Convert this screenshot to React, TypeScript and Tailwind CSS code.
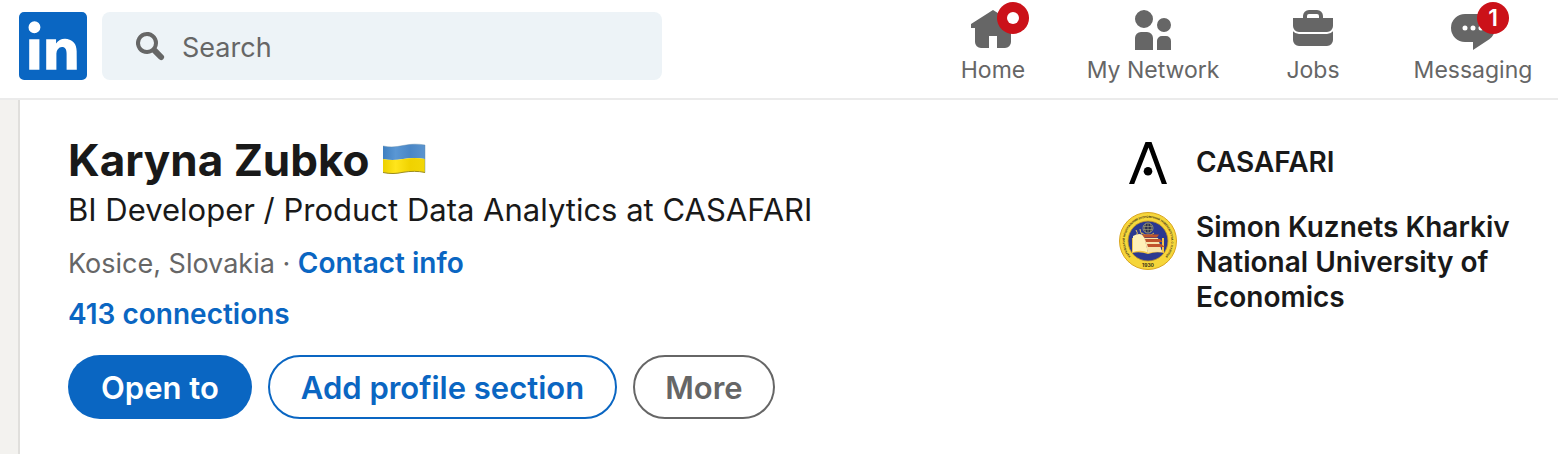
import React from 'react';

const HOME =
  'M23 9v2h-2v7a3 3 0 01-3 3h-4v-6h-4v6H6a3 3 0 01-3-3v-7H1V9l11-7 5 3.18V2h3v5.09z';
const NETWORK =
  'M12 16v6H3v-6a3 3 0 013-3h3a3 3 0 013 3zm5.5-3A3.5 3.5 0 1014 9.5a3.5 3.5 0 003.5 3.5zm1 2h-2a2.5 2.5 0 00-2.5 2.5V22h7v-4.5a2.5 2.5 0 00-2.5-2.5zM7.5 2A4.5 4.5 0 1012 6.5 4.49 4.49 0 007.5 2z';
const JOBS =
  'M17 6V5a3 3 0 00-3-3h-4a3 3 0 00-3 3v1H2v4a3 3 0 003 3h14a3 3 0 003-3V6zM9 5a1 1 0 011-1h4a1 1 0 011 1v1H9zm10 9a4 4 0 003-1.38V17a3 3 0 01-3 3H5a3 3 0 01-3-3v-4.38A4 4 0 005 14z';
const MESSAGING =
  'M16 4H8a7 7 0 000 14h4v4l8.16-5.39A6.78 6.78 0 0023 11a7 7 0 00-7-7zm-8 8.25A1.25 1.25 0 119.25 11 1.25 1.25 0 018 12.25zm4 0A1.25 1.25 0 1113.25 11 1.25 1.25 0 0112 12.25zm4 0A1.25 1.25 0 1117.25 11 1.25 1.25 0 0116 12.25z';

type NavItem = { label: string; icon: string; badge?: React.ReactNode };

const navItems: NavItem[] = [
  { label: 'Home', icon: HOME, badge: <span className="size-3 rounded-full bg-white" /> },
  { label: 'My Network', icon: NETWORK },
  { label: 'Jobs', icon: JOBS },
  { label: 'Messaging', icon: MESSAGING, badge: '1' },
];

function Logo() {
  return (
    <svg viewBox="2 2 20 20" className="size-[68px]" aria-hidden="true">
      <rect x="3" y="3" width="18" height="18" fill="#fff" />
      <path
        fill="#0a66c2"
        d="M20.5 2h-17A1.5 1.5 0 002 3.5v17A1.5 1.5 0 003.5 22h17a1.5 1.5 0 001.5-1.5v-17A1.5 1.5 0 0020.5 2zM8 19H5v-9h3zM6.5 8.25A1.75 1.75 0 118.3 6.5a1.78 1.78 0 01-1.8 1.75zM19 19h-3v-4.74c0-1.42-.6-1.93-1.38-1.93A1.74 1.74 0 0013 14.19a.66.66 0 000 .14V19h-3v-9h2.9v1.3a3.11 3.11 0 012.7-1.4c1.55 0 3.36.86 3.36 3.66z"
      />
    </svg>
  );
}

function Flag() {
  return (
    <svg viewBox="0 1 44 32" className="h-8 w-11 overflow-visible" role="img" aria-label="Ukraine">
      <defs>
        <linearGradient id="flag-blue" x1="0" x2="1" y1="0" y2="0">
          <stop offset="0" stopColor="#3f7fc0" />
          <stop offset="0.3" stopColor="#5a97d4" />
          <stop offset="0.65" stopColor="#4a86c6" />
          <stop offset="1" stopColor="#5b94cf" />
        </linearGradient>
        <linearGradient id="flag-yellow" x1="0" x2="1" y1="0" y2="0">
          <stop offset="0" stopColor="#ecd000" />
          <stop offset="0.3" stopColor="#ffe51c" />
          <stop offset="0.65" stopColor="#f0d200" />
          <stop offset="1" stopColor="#f2d708" />
        </linearGradient>
      </defs>
      <path d="M1 3C8 4.500 14 4 21 2.500C29 .8 36 .8 43 2V16C36 14.500 29 14.500 21 16C14 17.200 8 17.500 1 16z" fill="url(#flag-blue)" />
      <path d="M1 16C8 17.500 14 17.200 21 16C29 14.500 36 14.500 43 16V29.500C36 28 29 28 21 29.300C14 30.800 8 31 1 29.500z" fill="url(#flag-yellow)" />
      <path d="M1 29.500C8 31 14 30.800 21 29.300C29 28 36 28 43 29.500" fill="none" stroke="#9c8c1c" strokeWidth="1" />
      <path d="M1 3C8 4.500 14 4 21 2.500C29 .8 36 .8 43 2V29.500" fill="none" stroke="#5b86a8" strokeOpacity="0.6" strokeWidth="0.7" />
    </svg>
  );
}

function CasafariMark() {
  return (
    <svg viewBox="0 0 64 64" className="size-16 shrink-0" aria-hidden="true">
      <path d="M29.500 12h6L51 54h-5.200L32.500 17.500 18.200 54H13z" fill="#000" />
      <circle cx="32" cy="41.300" r="4.300" fill="#000" />
    </svg>
  );
}

function UniversitySeal() {
  return (
    <svg viewBox="0 1 64 64" className="size-16 shrink-0" aria-hidden="true">
      <defs>
        <path id="seal-ring" d="M19.200 51.500A23.300 23.300 0 1 1 44.800 51.500" />
      </defs>
      <circle cx="32" cy="32" r="28.500" fill="#f6d63a" stroke="#d9a520" strokeWidth="1" />
      <circle cx="32" cy="32" r="20" fill="#2b3990" stroke="#c79a24" strokeWidth="0.8" />
      <text fontSize="2.700" fontWeight="700" fill="#3a3218" fontFamily="Inter, sans-serif">
        <textPath href="#seal-ring" startOffset="50%" textAnchor="middle">
          ХАРКІВСЬКИЙ НАЦІОНАЛЬНИЙ ЕКОНОМІЧНИЙ УНІВЕРСИТЕТ ІМ. С. КУЗНЕЦЯ
        </textPath>
      </text>
      <text x="32" y="58" fontSize="5" fontWeight="700" fill="#3a3218" textAnchor="middle" fontFamily="Inter, sans-serif">
        1930
      </text>
      <circle cx="32" cy="19" r="5" fill="#2a2d4a" stroke="#9a9a78" strokeWidth="0.9" />
      <path d="M27.500 17.500h9M27.500 20.500h9M32 14.500v9M29.500 15q-2 4 0 8M34.500 15q2 4 0 8" fill="none" stroke="#a9a77c" strokeWidth="0.6" />
      <path d="M26 24l3 2h6l3-2" fill="none" stroke="#d9b54a" strokeWidth="1" />
      <path d="M16 29v15q8-2 16 1 8-3 16-1V29h-2v12q-7-1-14 2-7-4-14-1V29z" fill="#f3c646" />
      <path d="M17 27q7-4 11 0l4 16.500q-7-3-15-.5z" fill="#fff1b8" />
      <path d="M20 21q2 3 1 5M24 20q0 3 2 5" stroke="#e8c860" strokeWidth="1" fill="none" />
      <path d="M28 29h14l4 14q-8-1-14 1z" fill="#f7e3a8" />
      <path d="M26 25.500h17l-2 3H28zM29 30h15l2.500 3H30zM31 35h14l4 3H32z" fill="#c0532a" />
    </svg>
  );
}

export default function App() {
  return (
    <div className="flex min-h-screen flex-col bg-white font-['Inter','Liberation_Sans',sans-serif] text-[#191919]">
      <header className="flex h-[100px] items-start border-b-2 border-[#ebebeb] pr-[5px] pl-[19px]">
        <a href="#feed" aria-label="LinkedIn" className="mt-3 shrink-0">
          <Logo />
        </a>
        <label className="mt-3 ml-[15px] flex h-[68px] w-[560px] items-center gap-4 rounded-lg bg-[#edf3f7] pl-8">
          <svg viewBox="0 0 16 16" className="size-8 shrink-0" fill="#666" aria-hidden="true">
            <path d="M14.560 12.440L11.300 9.180a5.510 5.510 0 10-2.120 2.120l3.260 3.260a1.500 1.500 0 102.120-2.120zM3 6.500A3.500 3.500 0 116.500 10 3.500 3.500 0 013 6.500z" />
          </svg>
          <input
            type="text"
            aria-label="Search"
            placeholder="Search"
            className="min-w-0 flex-1 bg-transparent pt-1 text-[27px] outline-none placeholder:text-[#666]"
          />
        </label>
        <nav className="ml-auto flex pt-1.5">
          {navItems.map((item) => (
            <a key={item.label} href="#nav" className="flex w-40 flex-col items-center text-[#666]">
              <span className="relative">
                <svg viewBox="0 0 24 24" className="size-12" fill="currentColor" aria-hidden="true">
                  <path d={item.icon} />
                </svg>
                {item.badge && (
                  <span className="absolute -top-1 left-7 flex size-8 items-center justify-center rounded-full bg-[#cb1119] text-[23px] font-semibold text-white">
                    {item.badge}
                  </span>
                )}
              </span>
              <span className="text-[23px] leading-8 whitespace-nowrap">{item.label}</span>
            </a>
          ))}
        </nav>
      </header>

      <main className="flex flex-1 bg-[#f3f2ef] pl-[18px]">
        <section className="flex flex-1 justify-between border-l-2 border-[#e0dfdc] bg-white pr-10 pb-8 pl-12">
          <div className="pt-[30px]">
            <h1 className="flex items-center gap-3 text-[44px] leading-[60px] font-bold">
              Karyna Zubko
              <Flag />
            </h1>
            <p className="text-[31px] leading-10">BI Developer / Product Data Analytics at CASAFARI</p>
            <p className="mt-[13px] text-[27px] leading-10 text-[#666]">
              Kosice, Slovakia ·{' '}
              <a href="#contact" className="text-[28px] font-semibold text-[#0a66c2]">
                Contact info
              </a>
            </p>
            <a href="#connections" className="mt-2.5 block text-[28px] leading-10 font-semibold text-[#0a66c2]">
              413 connections
            </a>
            <div className="mt-[21px] flex gap-4">
              <button className="h-16 rounded-full bg-[#0a66c2] px-[33px] pt-0.5 text-[31px] font-semibold text-white">Open to</button>
              <button className="h-16 rounded-full border-2 border-[#0a66c2] px-[31px] pt-0.5 text-[31px] font-semibold text-[#0a66c2]">
                Add profile section
              </button>
              <button className="h-16 rounded-full border-2 border-[#666] px-[30px] pt-0.5 text-[31px] font-semibold text-[#666]">
                More
              </button>
            </div>
          </div>

          <ul className="flex w-[402px] flex-col gap-4 pt-[30px] text-[28px] leading-[35px] font-semibold">
            <li className="flex items-center gap-4">
              <CasafariMark />
              <a href="#casafari">CASAFARI</a>
            </li>
            <li className="flex items-start gap-4">
              <UniversitySeal />
              <a href="#university">Simon Kuznets Kharkiv National University of Economics</a>
            </li>
          </ul>
        </section>
      </main>
    </div>
  );
}
